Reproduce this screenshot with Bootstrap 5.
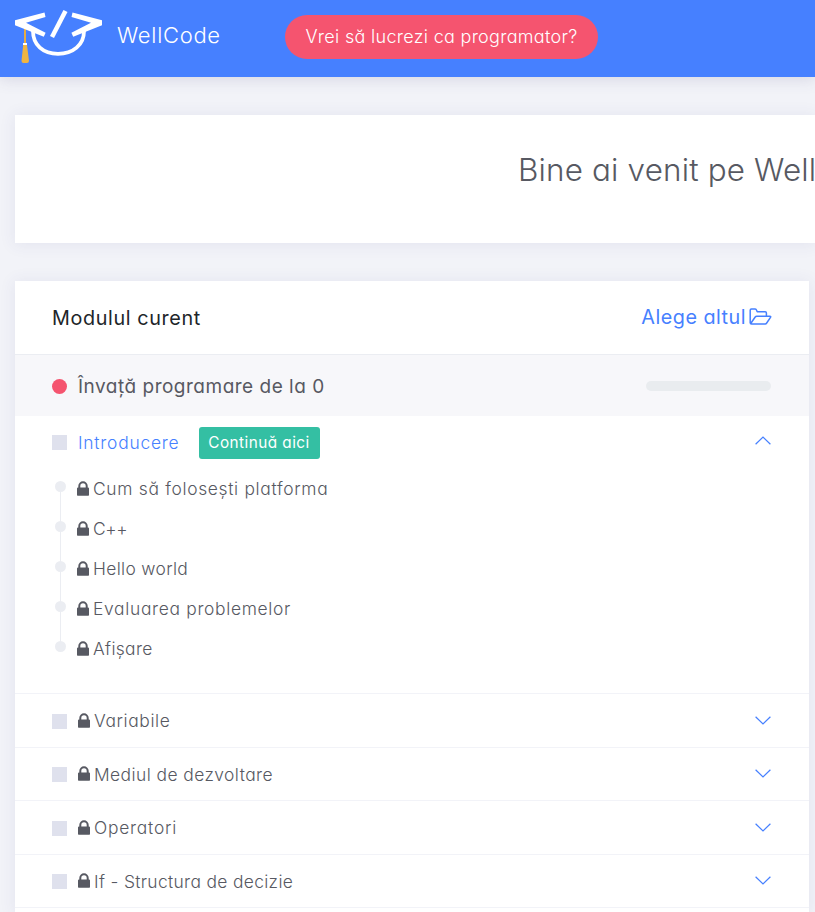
<!DOCTYPE html>
<html lang="ro">
<head>
<meta charset="utf-8">
<meta name="viewport" content="width=device-width, initial-scale=1">
<title>WellCode</title>
<link href="https://cdn.jsdelivr.net/npm/bootstrap@5.3.0/dist/css/bootstrap.min.css" rel="stylesheet">
<script src="https://cdn.jsdelivr.net/npm/bootstrap@5.3.0/dist/js/bootstrap.bundle.min.js"></script>
<style>
:root{--wc-blue:#4680ff;--wc-red:#f5546f;--wc-ink:#575962}
body{font-family:"Inter","Open Sans",sans-serif;font-feature-settings:"cv11";font-weight:300;font-size:17.4px;color:var(--wc-ink);background:#f2f3f8;overflow:hidden;height:912px}
.topbar{height:77px;background:var(--wc-blue);box-shadow:0 1px 15px 1px rgba(69,65,120,.16);padding-left:15px}
.logo{width:88px;height:54px;margin-top:-4px}
.brand-name{font-size:22px;letter-spacing:.7px;margin-left:14px;margin-top:-6px;width:154px}
.cta{height:44px;width:313px;border-radius:22px;background:var(--wc-red);margin-left:14px;margin-top:-3px;font-size:18px;letter-spacing:.3px;padding-bottom:2px}
.portlet{background:#fff;box-shadow:0 1px 15px 1px rgba(69,65,140,.08)}
.welcome{margin:38px 0 0 15px;height:128px;padding:33px 0 0 503px}
.welcome h1{font-size:31.4px;line-height:44px;font-weight:300;letter-spacing:.17px}
.module{margin:38px 0 0 15px;width:794px}
.module-head{height:74px;padding:0 37px;border-bottom:1px solid #ebedf2;font-size:19.8px}
.module-title{color:#212529;font-weight:400;letter-spacing:.62px;padding-top:2px}
.choose{color:var(--wc-blue);font-weight:400;letter-spacing:.48px}
.choose svg{width:23px;height:17px;margin-left:3px;margin-top:-2px}
.course{height:61px;padding:0 38px 0 37px;background:#f7f7fa;font-size:19px;font-weight:400;letter-spacing:.5px}
.course span{padding-top:3px}
.dot{width:15px;height:15px;margin-top:1px;border-radius:50%;background:var(--wc-red)}
.meter{width:125px;height:10px;border-radius:5px;background:#e9ecef}
.sq{width:15px;height:15px;background:#dfe1ed}
.bullet{margin-right:11px}
.chapter{height:53.5px;padding:0 38px 0 37px;border-bottom:1px solid #f2f3f8}
.chapter.open{border:0}
.chapter .sq{margin-top:2px}
.chapter.open .sq{margin-top:0}
.chapter span{padding-top:2px}
.chapter .chapter-name{color:var(--wc-blue);letter-spacing:.79px;padding-top:1px}
.lock{width:12px;height:15px;margin-right:4px}
.arrow{width:16px;height:9px}
.chapter.open .arrow{transform:rotate(180deg);margin-top:-4px}
.go{background:#34bfa3;height:32px;width:121px;border-radius:3px;font-size:15.3px;letter-spacing:.47px;font-weight:400;margin-left:19px;padding-top:1px}
.lessons{margin:-1px 0 0;padding:0 37px 24.5px 40px;border-bottom:1px solid #f2f3f8}
.lesson{height:40px}
.lesson span{padding-top:2px}
.rail{width:11px;height:40px;margin-right:11px;padding-top:12px;background:linear-gradient(#ebedf2,#ebedf2) 5px 0/1px 100% no-repeat}
.rail::before{content:"";display:block;width:11px;height:11px;border-radius:50%;background:#ebedf2}
.lesson:first-child .rail{background-position:5px 17px}
.lesson:last-child .rail{background-size:1px 17px}
.ls-0{letter-spacing:-.4px}
.ls-1{letter-spacing:.34px}
.ls-2{letter-spacing:.44px}
.ls-3{letter-spacing:.62px}
.ls-4{letter-spacing:.69px}
.ls-5{letter-spacing:.78px}
</style>
</head>
<body>
<svg class="d-none">
<symbol id="lock" viewBox="0 0 12 15"><path d="M1.300 6.500V5a4.700 4.700 0 0 1 9.400 0v1.500H11q1 0 1 1V14q0 .7-.7.7H.7Q0 14.700 0 14V7.500q0-1 1-1zM3.300 6.500h5.400V5a2.700 2.700 0 0 0-5.400 0z" fill="#575962"/></symbol>
<symbol id="down" viewBox="0 0 16 9"><path d="M.6.7 8 8 15.400.7" fill="none" stroke="#4680ff" stroke-width="1.200"/></symbol>
</svg>
<header class="topbar d-flex align-items-center text-white">
<svg class="logo" viewBox="15 10 88 54"><path d="M25 29v14" stroke="#e5ab42" stroke-width="2"/><path d="M15 20.300 44.500 12.600 45.500 17 26 22.800 45.600 32.700 43.800 36.800 15 25.300zM102 20.300 72.500 12.600 71.500 17 91 22.800 71.400 32.700 73.200 36.800 102 25.300z" fill="#fff"/><path d="M65.500 11 52 37" stroke="#fff" stroke-width="4.500"/><path d="M33 31C33 45 43 53.800 58 53.800S84 45 84 31" fill="none" stroke="#fff" stroke-width="3.800"/><path d="M23 43h4v2h-4z" fill="#fff"/><path d="M23.200 45h3.800l2 16q-.2 2-2 2h-3.500q-2 0-2-2z" fill="#efb442"/></svg>
<span class="brand-name">WellCode</span>
<a class="cta d-flex align-items-center justify-content-center text-white text-decoration-none">Vrei să lucrezi ca programator?</a>
</header>
<section class="portlet welcome"><h1 class="text-nowrap">Bine ai venit pe Well</h1></section>
<main class="portlet module">
<div class="module-head d-flex align-items-center justify-content-between"><span class="module-title">Modulul curent</span><a class="choose text-decoration-none d-flex align-items-center">Alege altul<svg viewBox="0 0 23 17" fill="none" stroke="#4680ff" stroke-width="1.500" stroke-linejoin="round"><path d="M1.200 15V2.200Q1.200 1 2.400 1H6.200Q7.200 1 7.500 2L8.200 3.700H16.200Q17.400 3.700 17.400 5V8M1.700 15.500 6.200 9Q6.700 8.300 7.700 8.300H20.900Q22.200 8.300 21.500 9.300L17.700 15Q17.100 16 16.200 16H2.500Q1.200 16 1.200 14.700"/></svg></a></div>
<div class="course d-flex align-items-center"><i class="dot bullet"></i><span>Învață programare de la 0</span><i class="meter ms-auto"></i></div>
<div class="chapter open d-flex align-items-center"><i class="sq bullet"></i><span class="chapter-name">Introducere</span><a class="go text-white text-decoration-none d-flex align-items-center justify-content-center">Continuă aici</a><svg class="arrow ms-auto"><use href="#down"/></svg></div>
<ul class="lessons list-unstyled">
<li class="lesson d-flex align-items-center"><i class="rail"></i><svg class="lock"><use href="#lock"/></svg><span class="ls-4">Cum să folosești platforma</span></li>
<li class="lesson d-flex align-items-center"><i class="rail"></i><svg class="lock"><use href="#lock"/></svg><span class="ls-0">C++</span></li>
<li class="lesson d-flex align-items-center"><i class="rail"></i><svg class="lock"><use href="#lock"/></svg><span class="ls-1">Hello world</span></li>
<li class="lesson d-flex align-items-center"><i class="rail"></i><svg class="lock"><use href="#lock"/></svg><span class="ls-4">Evaluarea problemelor</span></li>
<li class="lesson d-flex align-items-center"><i class="rail"></i><svg class="lock"><use href="#lock"/></svg><span class="ls-1">Afișare</span></li>
</ul>
<div class="chapter d-flex align-items-center"><i class="sq bullet"></i><svg class="lock"><use href="#lock"/></svg><span class="ls-3">Variabile</span><svg class="arrow ms-auto"><use href="#down"/></svg></div>
<div class="chapter d-flex align-items-center"><i class="sq bullet"></i><svg class="lock"><use href="#lock"/></svg><span class="ls-2">Mediul de dezvoltare</span><svg class="arrow ms-auto"><use href="#down"/></svg></div>
<div class="chapter d-flex align-items-center"><i class="sq bullet"></i><svg class="lock"><use href="#lock"/></svg><span class="ls-5">Operatori</span><svg class="arrow ms-auto"><use href="#down"/></svg></div>
<div class="chapter d-flex align-items-center"><i class="sq bullet"></i><svg class="lock"><use href="#lock"/></svg><span class="ls-1">If - Structura de decizie</span><svg class="arrow ms-auto"><use href="#down"/></svg></div>
<div class="pb-1"></div>
</main>
</body>
</html>
